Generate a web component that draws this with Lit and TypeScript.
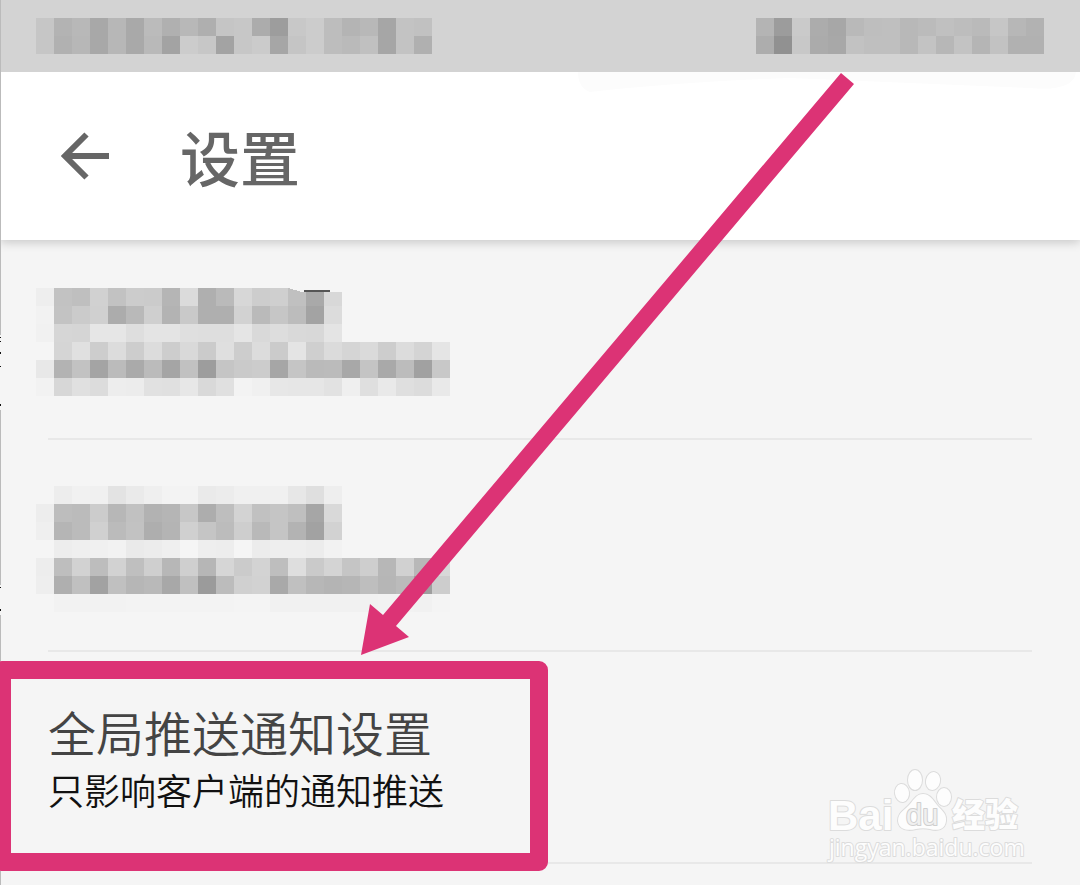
import { LitElement, html, css, svg, nothing } from "lit";
import { customElement, property } from "lit/decorators.js";

const CELL = 18;

const STATUS_LEFT = [
  "c6 b3 b8 a8 b7 a9 bb b0 b8 af c5 c7 ac 9d c8 cc bd b4 b8 a6 c3 c1",
  "c6 b1 b7 a8 b7 a9 b9 a3 cc c7 a3 c7 cb a6 c5 cc bd ba c0 a6 c3 b0",
];

const STATUS_RIGHT = [
  "b4 9c ca ac a7 b9 be bf b8 bb c0 bd ba c6 b7 b2",
  "ad 91 c8 ab a8 c2 bf bf b8 c3 b7 c3 b5 c2 b1 b1",
];

const FIRST_ITEM = [
  "ee c2 bf d1 c2 cc cb b5 db af ba d7 cd cf c0 a9 d8",
  "f2 c3 cb d0 ac b9 cf b3 c9 af af d2 ba c6 bc a3 dc",
  "f1 d6 d5 e6 e6 de e4 e4 df de de e5 d9 dd d9 d8 e4",
  "f5 d5 e0 cd dc cd dc cd d9 cb df cd dc cb e4 cf db d5 da cd dc d4 e5",
  "e8 b3 c2 a4 bb aa bb a5 c1 9d c5 ca cc a6 c5 ba bb a8 c4 a9 bc a1 c8",
  "f2 d7 e0 dc ed ec e1 e0 e7 d9 e0 f3 f0 e7 e6 e6 e2 ef df e9 df dc e9",
];

const SECOND_ITEM = [
  "f5 ed f1 f0 e3 ea ef f3 f3 ea ec f0 f0 f0 e7 df ee",
  "ed bd bb cc b7 c1 b2 b5 c7 ad be d3 c1 c5 bf a6 d9",
  "ef b5 bb d0 bb c2 ae b4 d0 c5 bc ce b9 c5 b3 a2 d2",
  "f5 ed ef f0 f2 ea ec ef f5 ee ed f5 ec ee ee ec f2",
  "ed be d2 bd d2 bf cf b7 cf b6 d6 cb d3 be de ca d4 c5 ce b7 d1 b8 d8",
  "ee af c0 a2 c0 b6 b9 a8 c0 9b bc d0 d2 a9 c0 b7 b4 b6 be b6 bb 9f cd",
  "f5 f2 f2 f2 f2 f3 f3 f3 f3 f3 f3 f4 f4 f1 f1 f1 f1 f1 f1 f2 f2 f1 f4",
];

/** Grid of grey squares that hides private text. */
@customElement("pixel-mask")
export class PixelMask extends LitElement {
  @property({ attribute: false }) rows: string[] = [];
  @property({ type: Boolean }) clipped = false;

  static styles = css`
    :host {
      display: block;
    }
    .grid {
      display: block;
    }
  `;

  render() {
    const rows = this.rows.map((r) => r.split(" "));
    const width = Math.max(...rows.map((r) => r.length)) * CELL;
    const height = rows.length * CELL;
    return html`<svg
      class="grid"
      width=${width}
      height=${height}
      shape-rendering="crispEdges"
      aria-hidden="true"
    >
      ${rows.map((row, y) =>
        row.map(
          (g, x) =>
            svg`<rect x=${x * CELL} y=${y * CELL} width=${CELL} height=${CELL} fill=${"#" + g + g + g}></rect>`
        )
      )}
      ${this.clipped
        ? svg`<path d="M252 0H306V4H266Z" fill="#f5f5f5"></path><rect x="268" y="2" width="26" height="2" fill="#555"></rect>`
        : nothing}
    </svg>`;
  }
}

/** Site watermark with the paw logo. */
@customElement("site-watermark")
export class SiteWatermark extends LitElement {
  static styles = css`
    :host {
      display: block;
    }
    .mark {
      display: block;
      overflow: visible;
    }
    .ink {
      fill: #fdfdfd;
      stroke: #dcdcdc;
      stroke-width: 2px;
      paint-order: stroke;
      stroke-linejoin: round;
    }
    .brand {
      font: 700 42px "Liberation Sans", Arial, sans-serif;
    }
    .paw {
      font: 400 29px "Liberation Sans", Arial, sans-serif;
      fill: #f0f0f0;
      stroke: #cfcfcf;
    }
    .cjk {
      font: 900 33px "Noto Sans CJK SC", sans-serif;
    }
    .url {
      font: 400 23px "Open Sans", sans-serif;
    }
  `;

  render() {
    return html`<svg class="mark" width="200" height="96" viewBox="0 0 200 96">
      <text class="ink brand" x="0" y="60">Bai</text>
      <g class="ink">
        <ellipse cx="74" cy="23" rx="7" ry="9" transform="rotate(-8 74 23)"></ellipse>
        <ellipse cx="87" cy="10" rx="7" ry="10"></ellipse>
        <ellipse cx="105" cy="11" rx="7" ry="9" transform="rotate(12 105 11)"></ellipse>
        <ellipse cx="116" cy="27" rx="7" ry="9"></ellipse>
        <path
          d="M95 24C102 24 105 30 109 35C113 40 119 43 118 51C117 60 109 61 102 59C97 58 93 58 88 59C80 61 71 60 70 51C70 42 77 40 82 34C86 29 89 24 95 24Z"
        ></path>
      </g>
      <text class="ink paw" x="78" y="55">du</text>
      <text class="ink cjk" x="124" y="57">经验</text>
      <text class="ink url" x="1" y="86">jingyan.baidu.com</text>
    </svg>`;
  }
}

@customElement("app-root")
export class AppRoot extends LitElement {
  static styles = css`
    :host {
      display: block;
      position: relative;
      min-height: 100vh;
      overflow: hidden;
      background: #f5f5f5;
      font-family: "Noto Sans CJK SC", sans-serif;
    }
    .status {
      position: relative;
      z-index: 1;
      display: flex;
      justify-content: space-between;
      padding: 18px 36px;
      background: #d3d3d3;
    }
    .header {
      display: flex;
      align-items: center;
      gap: 60px;
      height: 168px;
      padding: 0 48px;
      background: #fff;
      box-shadow: 0 2px 10px rgba(0, 0, 0, 0.2);
    }
    .back {
      display: block;
      width: 72px;
      height: 72px;
      padding: 0;
      border: 0;
      background: none;
      color: #666;
      cursor: pointer;
    }
    .back svg {
      display: block;
    }
    .title {
      margin: 0;
      font-size: 60px;
      line-height: 70px;
      font-weight: 500;
      color: #666;
    }
    .list {
      margin: 0;
      padding: 0;
      list-style: none;
    }
    .item {
      position: relative;
    }
    .item::after {
      content: "";
      display: block;
      height: 2px;
      margin: 0 48px;
      background: #e8e8e8;
    }
    .first {
      padding: 48px 36px 42px;
    }
    .second {
      padding: 46px 36px 38px;
    }
    .link {
      display: block;
      padding: 51px 48px 49px;
      text-decoration: none;
    }
    .name {
      display: block;
      margin-bottom: 6px;
      font-size: 48px;
      line-height: 56px;
      font-weight: 350;
      color: #444;
    }
    .note {
      display: block;
      font-size: 36px;
      line-height: 48px;
      font-weight: 350;
      color: #111;
    }
    .frame {
      position: absolute;
      z-index: 1;
      top: 9px;
      bottom: -7px;
      left: -7px;
      width: 555px;
      box-sizing: border-box;
      border: 18px solid #dc3375;
      border-radius: 9px;
      pointer-events: none;
    }
    .watermark {
      position: absolute;
      right: 52px;
      top: 118px;
      pointer-events: none;
    }
    .overlay {
      position: absolute;
      z-index: 2;
      top: 0;
      left: 0;
      pointer-events: none;
    }
  `;

  render() {
    return html`
      <div class="status">
        <pixel-mask .rows=${STATUS_LEFT}></pixel-mask>
        <pixel-mask .rows=${STATUS_RIGHT}></pixel-mask>
      </div>
      <header class="header">
        <button class="back" type="button" aria-label="返回">
          <svg width="72" height="72" viewBox="0 0 72 72" fill="none" stroke="currentColor" stroke-width="6">
            <path d="M61 36H17M38.500 14.500L17 36L38.500 57.500"></path>
          </svg>
        </button>
        <h1 class="title">设置</h1>
      </header>
      <ul class="list">
        <li class="item">
          <div class="first"><pixel-mask .rows=${FIRST_ITEM} clipped></pixel-mask></div>
        </li>
        <li class="item">
          <div class="second"><pixel-mask .rows=${SECOND_ITEM}></pixel-mask></div>
        </li>
        <li class="item">
          <a class="link" href="#push">
            <span class="name">全局推送通知设置</span>
            <span class="note">只影响客户端的通知推送</span>
          </a>
          <div class="frame"></div>
          <site-watermark class="watermark"></site-watermark>
        </li>
      </ul>
      <svg class="overlay" width="1080" height="885" aria-hidden="true">
        <path d="M578 72H1076Q1074 92 1030 88L790 78Q680 82 590 92Q578 88 578 72Z" fill="#fcfcfc"></path>
        <path d="M0 0H1V335H0ZM0 615H1V661H0ZM0 871H1V885H0ZM0 410H1V585H0Z" fill="#bbb"></path>
        <path d="M0 337H1V338H0ZM0 341H1V342H0ZM0 352H1V354H0ZM0 366H1V367H0ZM0 404H1V406H0ZM0 587H1V588H0ZM0 609H1V611H0Z" fill="#111"></path>
        <path d="M841 73L854 84L396 626L409 637L361 655L370 604L383 615Z" fill="#dc3375"></path>
      </svg>
    `;
  }
}
